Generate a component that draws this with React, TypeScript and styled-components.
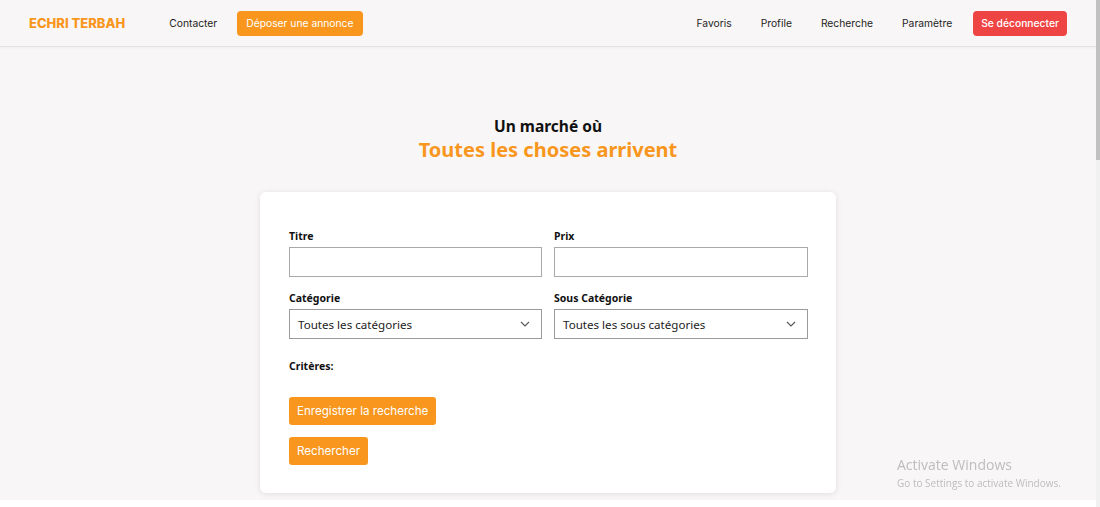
import React, { useState } from 'react';
import styled, { createGlobalStyle } from 'styled-components';

const orange = '#f8961e';
const pageBg = '#f8f6f6';

const GlobalStyle = createGlobalStyle`
  html, body {
    margin: 0;
    padding: 0;
    background: #ffffff;
    overflow: hidden;
  }
  * { box-sizing: border-box; }
`;

const Page = styled.div`
  width: calc(100% - 4px);
  background: ${pageBg};
  min-height: 500px;
  padding-bottom: 7px;
  font-family: Inter, "Liberation Sans", sans-serif;
`;

const Header = styled.header`
  height: 47px;
  display: flex;
  align-items: center;
  justify-content: space-between;
  padding: 0 29px 0 29px;
  border-bottom: 1px solid #e4e2e2;
  box-shadow: 0 1px 2px rgba(0, 0, 0, 0.04);
`;

const Group = styled.nav`
  display: flex;
  align-items: center;
`;

const Logo = styled.div`
  color: ${orange};
  font-weight: 800;
  font-size: 13px;
  margin-right: 44px;
`;

const NavLink = styled.a<{ $gap?: number }>`
  color: #1f1f1f;
  font-size: 10.3px;
  text-decoration: none;
  margin-right: ${(p) => p.$gap ?? 29}px;
  cursor: pointer;
`;

const NavButton = styled.button<{ $danger?: boolean }>`
  height: 25px;
  padding: 0 ${(p) => (p.$danger ? 8 : 9)}px;
  border: none;
  border-radius: 4px;
  background: ${(p) => (p.$danger ? '#ef4444' : orange)};
  color: #fff;
  font-family: Inter, "Liberation Sans", sans-serif;
  font-size: 10.3px;
  font-weight: ${(p) => (p.$danger ? 500 : 400)};
  cursor: pointer;
`;

const Hero = styled.section`
  text-align: center;
  padding-top: 69px;
  font-family: "Noto Sans", "Open Sans", sans-serif;
`;

const Kicker = styled.h2`
  margin: 0;
  font-size: 15.5px;
  font-weight: 700;
  color: #111;
  line-height: 20px;
`;

const Slogan = styled.h1`
  margin: 0;
  font-size: 20px;
  font-weight: 700;
  color: ${orange};
  line-height: 28px;
`;

const Card = styled.form`
  width: 576px;
  margin: 28px auto 0;
  background: #fff;
  border-radius: 6px;
  box-shadow: 0 1px 6px rgba(0, 0, 0, 0.1);
  padding: 37px 28px 28px 29px;
  font-family: "Noto Sans", "Open Sans", sans-serif;
`;

const Grid = styled.div`
  display: grid;
  grid-template-columns: 253px 254px;
  column-gap: 12px;
  row-gap: 14px;
`;

const Field = styled.label`
  display: flex;
  flex-direction: column;
`;

const Label = styled.span`
  font-size: 10.5px;
  font-weight: 700;
  color: #111;
  line-height: 14px;
  margin-bottom: 4px;
`;

const Input = styled.input`
  height: 30px;
  border: 1px solid #a9a9a9;
  border-radius: 0;
  background: #fff;
  padding: 0 8px;
  font-size: 11px;
  outline: none;
`;

const SelectBox = styled.div`
  height: 30px;
  border: 1px solid #9a9a9a;
  background: #fff;
  display: flex;
  align-items: center;
  justify-content: space-between;
  padding: 0 11px 0 8px;
  font-size: 11.6px;
  color: #222;
`;

const Criteria = styled.div`
  margin-top: 20px;
  font-size: 10.5px;
  font-weight: 700;
  color: #111;
`;

const Actions = styled.div`
  margin-top: 24px;
  display: flex;
  flex-direction: column;
  align-items: flex-start;
  gap: 12px;
`;

const ActionButton = styled.button`
  height: 28px;
  padding: 0 8px;
  border: none;
  border-radius: 3px;
  background: ${orange};
  color: #fff;
  font-family: Inter, "Liberation Sans", sans-serif;
  font-size: 11.6px;
  cursor: pointer;
`;

const Watermark = styled.div`
  position: fixed;
  left: 897px;
  top: 457px;
  color: #bdbdbd;
  font-family: "Open Sans", "Noto Sans", sans-serif;
  line-height: 1.2;
  pointer-events: none;
`;

const WmTitle = styled.div`
  font-size: 14px;
`;

const WmSub = styled.div`
  font-size: 10px;
  margin-top: 3px;
`;

const ScrollTrack = styled.div`
  position: fixed;
  right: 0;
  top: 0;
  width: 4px;
  height: 100%;
  background: #f1f1f1;
`;

const ScrollThumb = styled.div`
  height: 160px;
  background: #c1c1c1;
`;

const Chevron = () => (
  <svg width="10" height="6" viewBox="0 0 10 6" fill="none">
    <path d="M1 1l4 4 4-4" stroke="#555" strokeWidth="1.1" />
  </svg>
);

const Select = ({ value }: { value: string }) => (
  <SelectBox>
    <span>{value}</span>
    <Chevron />
  </SelectBox>
);

export default function App() {
  const [titre, setTitre] = useState('');
  const [prix, setPrix] = useState('');

  return (
    <>
      <GlobalStyle />
      <Page>
        <Header>
          <Group>
            <Logo>ECHRI TERBAH</Logo>
            <NavLink $gap={20}>Contacter</NavLink>
            <NavButton type="button">Déposer une annonce</NavButton>
          </Group>
          <Group>
            <NavLink>Favoris</NavLink>
            <NavLink>Profile</NavLink>
            <NavLink>Recherche</NavLink>
            <NavLink $gap={21}>Paramètre</NavLink>
            <NavButton type="button" $danger>
              Se déconnecter
            </NavButton>
          </Group>
        </Header>

        <Hero>
          <Kicker>Un marché où</Kicker>
          <Slogan>Toutes les choses arrivent</Slogan>
        </Hero>

        <Card onSubmit={(e) => e.preventDefault()}>
          <Grid>
            <Field>
              <Label>Titre</Label>
              <Input value={titre} onChange={(e) => setTitre(e.target.value)} />
            </Field>
            <Field>
              <Label>Prix</Label>
              <Input value={prix} onChange={(e) => setPrix(e.target.value)} />
            </Field>
            <Field>
              <Label>Catégorie</Label>
              <Select value="Toutes les catégories" />
            </Field>
            <Field>
              <Label>Sous Catégorie</Label>
              <Select value="Toutes les sous catégories" />
            </Field>
          </Grid>
          <Criteria>Critères:</Criteria>
          <Actions>
            <ActionButton type="button">Enregistrer la recherche</ActionButton>
            <ActionButton type="submit">Rechercher</ActionButton>
          </Actions>
        </Card>
      </Page>

      <Watermark>
        <WmTitle>Activate Windows</WmTitle>
        <WmSub>Go to Settings to activate Windows.</WmSub>
      </Watermark>
      <ScrollTrack>
        <ScrollThumb />
      </ScrollTrack>
    </>
  );
}
